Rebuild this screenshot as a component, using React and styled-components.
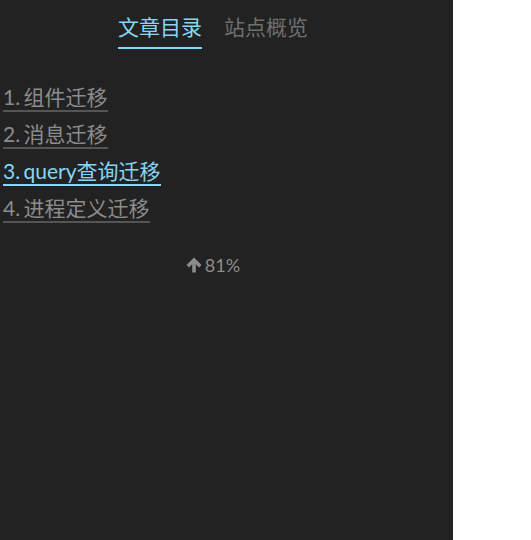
import React, { useState } from "react";
import styled, { createGlobalStyle } from "styled-components";

const GlobalStyle = createGlobalStyle`
  html, body {
    margin: 0;
    padding: 0;
    background: #fff;
  }
  body {
    font-family: Lato, "Noto Sans CJK SC", sans-serif;
  }
`;

const Sidebar = styled.aside`
  width: 453px;
  height: 540px;
  background-color: #222;
  box-sizing: border-box;
  padding-top: 11px;
`;

const Tabs = styled.div`
  display: flex;
  justify-content: center;
  gap: 22px;
  padding-right: 27px;
`;

const Tab = styled.div`
  font-size: 21px;
  line-height: 32px;
  padding-bottom: 4px;
  color: ${(props) => (props.active ? "#86d6f7" : "#6f6f6f")};
  border-bottom: 2px solid ${(props) => (props.active ? "#86d6f7" : "transparent")};
  cursor: pointer;
`;

const Toc = styled.ol`
  list-style: none;
  margin: 35px 0 0;
  padding: 0 0 0 3px;
`;

const TocItem = styled.li`
  height: 37px;
`;

const TocLink = styled.a`
  font-size: 21px;
  line-height: 26px;
  word-spacing: -2px;
  color: ${(props) => (props.active ? "#86d6f7" : "#8c8c8c")};
  text-decoration: none;
  border-bottom: 2px solid ${(props) => (props.active ? "#86d6f7" : "#555")};
  display: inline-block;
`;

const Progress = styled.div`
  display: flex;
  justify-content: center;
  align-items: center;
  gap: 3px;
  margin-top: 22px;
  padding-right: 27px;
  font-size: 18px;
  color: #8c8c8c;
`;

const items = ["1. 组件迁移", "2. 消息迁移", "3. query查询迁移", "4. 进程定义迁移"];

export default function App() {
  const [tab, setTab] = useState(0);
  return (
    <>
      <GlobalStyle />
      <Sidebar>
        <Tabs>
          <Tab active={tab === 0} onClick={() => setTab(0)}>文章目录</Tab>
          <Tab active={tab === 1} onClick={() => setTab(1)}>站点概览</Tab>
        </Tabs>
        <Toc>
          {items.map((t, i) => (
            <TocItem key={t}>
              <TocLink href="#" active={i === 2}>{t}</TocLink>
            </TocItem>
          ))}
        </Toc>
        <Progress>
          <svg width="16" height="16" viewBox="0 0 16 16">
            <path d="M8 0.5 L15.5 8 L13 10.4 L9.8 7.2 V15.5 H6.2 V7.2 L3 10.4 L0.5 8 Z" fill="#8c8c8c" />
          </svg>
          81%
        </Progress>
      </Sidebar>
    </>
  );
}
